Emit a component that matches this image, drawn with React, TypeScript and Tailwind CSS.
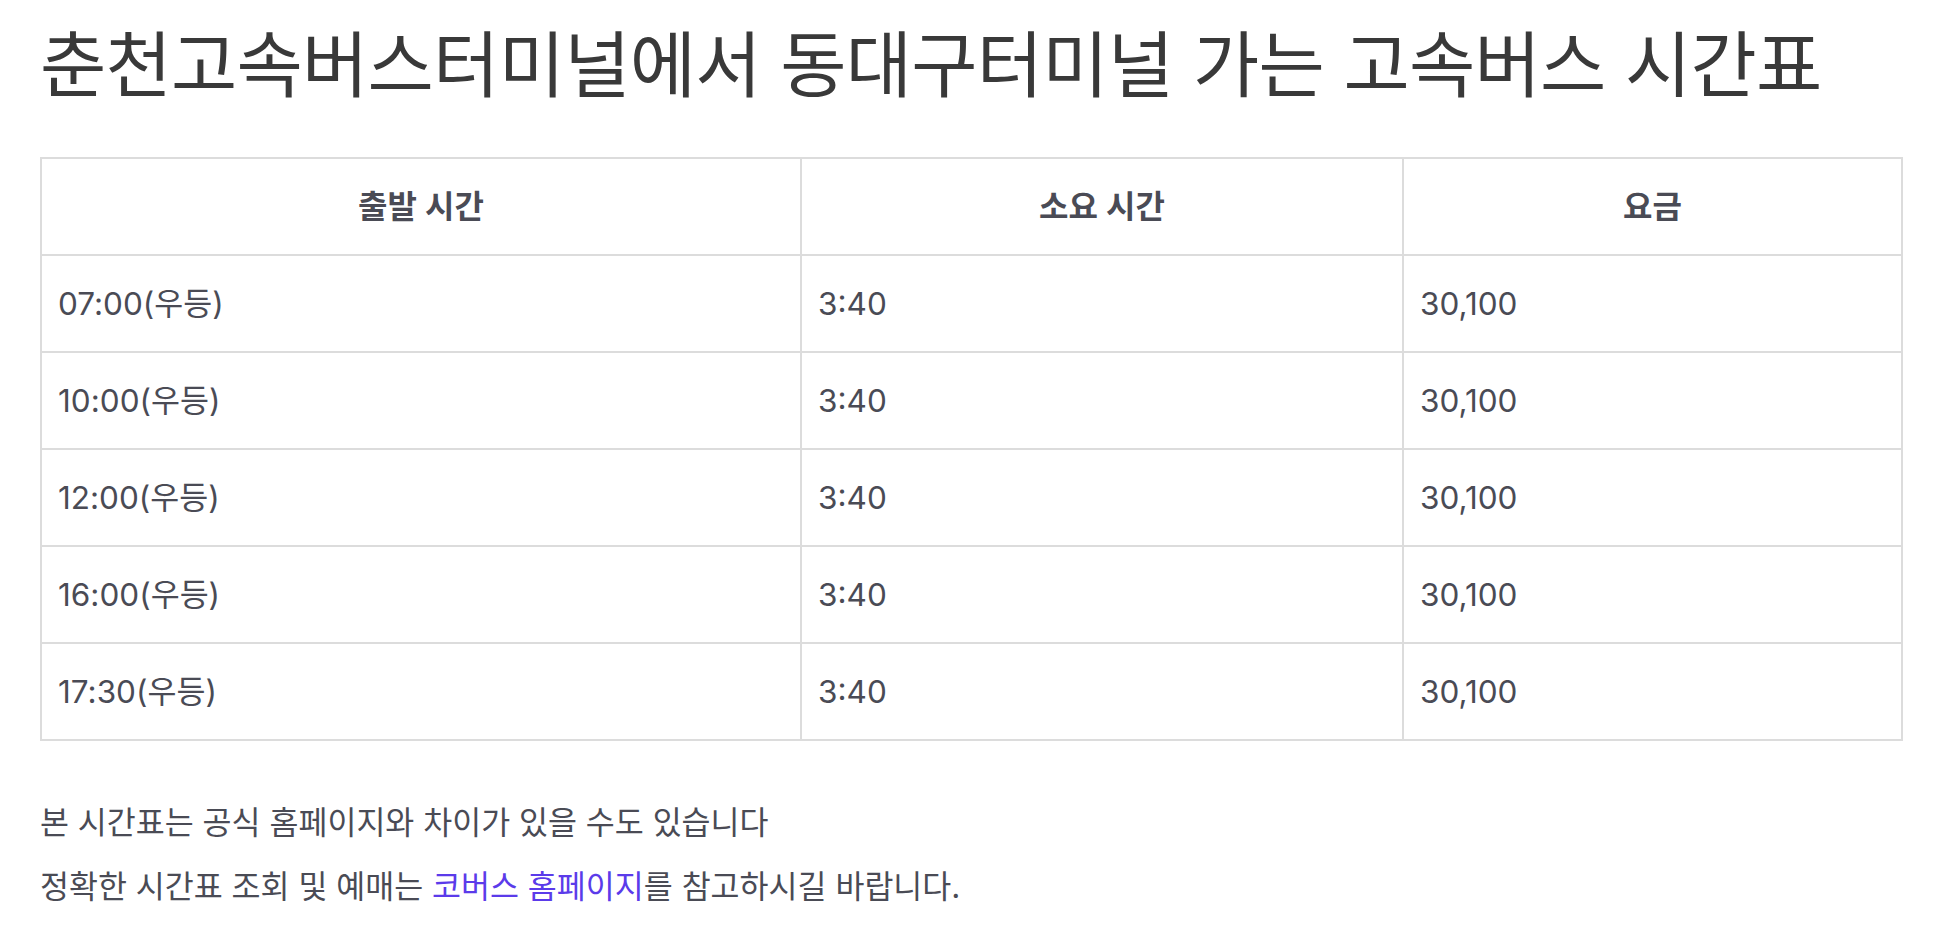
import React from 'react';

interface BusRow {
  depart: string;
  duration: string;
  fare: string;
}

const rows: BusRow[] = [
  { depart: '07:00(우등)', duration: '3:40', fare: '30,100' },
  { depart: '10:00(우등)', duration: '3:40', fare: '30,100' },
  { depart: '12:00(우등)', duration: '3:40', fare: '30,100' },
  { depart: '16:00(우등)', duration: '3:40', fare: '30,100' },
  { depart: '17:30(우등)', duration: '3:40', fare: '30,100' },
];

export default function App() {
  return (
    <div className="min-h-screen bg-white pl-[40px] pr-[37px] pt-[25px] font-['Inter','Noto_Sans_CJK_KR',sans-serif] text-[#4a4b55]">
      <h1 className="text-[72px] leading-[80px] font-normal text-[#393939] tracking-[-0.01em]">
        춘천고속버스터미널에서 동대구터미널 가는 고속버스 시간표
      </h1>

      <table className="mt-[52px] w-full table-fixed border-collapse text-[31.5px] leading-[44px]">
        <colgroup>
          <col className="w-[760px]" />
          <col className="w-[602px]" />
          <col />
        </colgroup>
        <thead>
          <tr>
            <th className="border-2 border-[#dcdcdc] h-[97px] px-4 text-center text-[32px] font-semibold">출발 시간</th>
            <th className="border-2 border-[#dcdcdc] h-[97px] px-4 text-center text-[32px] font-semibold">소요 시간</th>
            <th className="border-2 border-[#dcdcdc] h-[97px] px-4 text-center text-[32px] font-semibold">요금</th>
          </tr>
        </thead>
        <tbody>
          {rows.map((row) => (
            <tr key={row.depart}>
              <td className="border-2 border-[#dcdcdc] h-[97px] px-4 text-left">{row.depart}</td>
              <td className="border-2 border-[#dcdcdc] h-[97px] px-4 text-left">{row.duration}</td>
              <td className="border-2 border-[#dcdcdc] h-[97px] px-4 text-left">{row.fare}</td>
            </tr>
          ))}
        </tbody>
      </table>

      <div className="mt-[50px] text-[31.5px] leading-[64px]">
        <p>본 시간표는 공식 홈페이지와 차이가 있을 수도 있습니다</p>
        <p>
          정확한 시간표 조회 및 예매는{' '}
          <a href="#" className="text-[#5b3bea]">코버스 홈페이지</a>를 참고하시길 바랍니다.
        </p>
      </div>
    </div>
  );
}
